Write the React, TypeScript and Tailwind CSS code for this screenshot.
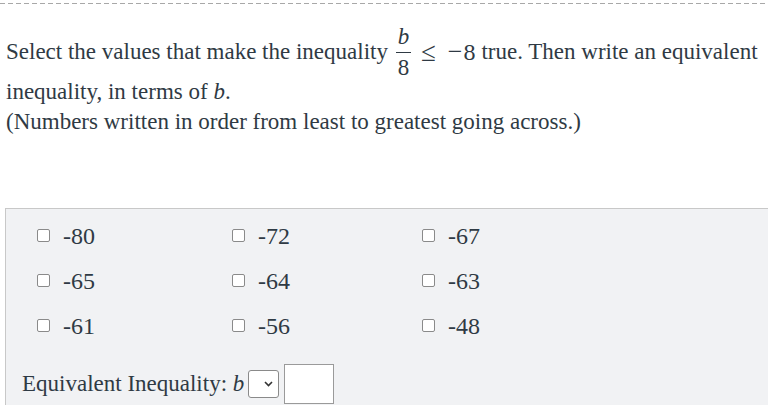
import React from "react";

const serif = "font-['Liberation_Serif',serif]";

function Box({ label }: { label: string }) {
  return (
    <div className="flex items-center h-[45px]">
      <span className="w-[13px] h-[13px] border border-[#8a8a8a] rounded-[2px] bg-white box-border" />
      <span className="ml-[13px] text-[24px] leading-none text-[#2f3a44]">{label}</span>
    </div>
  );
}

export default function App() {
  const vals = ["-80", "-72", "-67", "-65", "-64", "-63", "-61", "-56", "-48"];
  return (
    <div className={`w-[768px] h-[405px] overflow-hidden bg-white ${serif} text-[#2f3a44]`}>
      <div className="pt-[3px]">
        <div className="h-px bg-[repeating-linear-gradient(to_right,#a8a8a8_0_5px,transparent_5px_8px)]" />
      </div>
      <div className="pl-[6px] pt-[16px] text-[23px]">
        <div className="whitespace-nowrap h-[57px] pt-[7px] flex items-center">
          <span>Select the values that make the inequality</span>
          <span className="inline-flex flex-col items-center ml-[8px] mr-[10px] leading-none">
            <span className="italic text-[23px] leading-[22px]">b</span>
            <span className="block w-[15px] h-px bg-[#2f3a44] my-[4px]" />
            <span className="text-[23px] leading-[22px]">8</span>
          </span>
          <span className="text-[27px] leading-none mr-[12px]">≤</span>
          <span className="text-[26px] leading-none mr-[1px]">−</span>
          <span className="text-[24px] leading-none mr-[6px]">8</span>
          <span>true. Then write an equivalent</span>
        </div>
        <div className="whitespace-nowrap leading-[30px]">
          inequality, in terms of <span className="italic">b</span>.
        </div>
        <div className="whitespace-nowrap leading-[30px]">
          (Numbers written in order from least to greatest going across.)
        </div>
      </div>
      <div className="ml-[5px] mt-[71px] border-t border-l border-[#c8c8c8] bg-[#f1f2f4] h-[300px] w-[800px]">
        <div className="pl-[31px] pt-[4px] grid grid-cols-[195px_190px_190px]">
          {vals.map((v) => (
            <Box key={v} label={v} />
          ))}
        </div>
        <div className="pl-[16px] pt-[16px] flex items-center">
          <span className="text-[23px]">
            Equivalent Inequality: <span className="italic">b</span>
          </span>
          <span className="ml-[4px] w-[31px] h-[28px] bg-white border border-[#8a8a8a] rounded-[3px] flex items-center justify-end pr-[5px]">
            <svg width="9" height="6" viewBox="0 0 9 6">
              <path d="M1 1l3.5 3.5L8 1" fill="none" stroke="#333" strokeWidth="1.6" />
            </svg>
          </span>
          <span className="ml-[5px] w-[50px] h-[40px] bg-white border border-[#9a9a9a]" />
        </div>
      </div>
    </div>
  );
}
